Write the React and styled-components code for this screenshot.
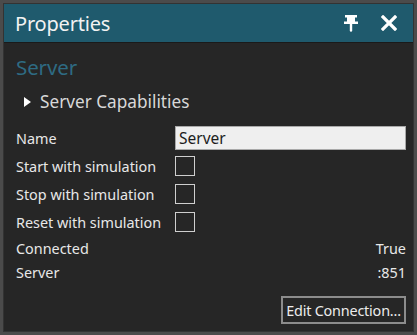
import React from "react";
import styled, { createGlobalStyle } from "styled-components";

const Global = createGlobalStyle`
  html, body { margin: 0; padding: 0; background: #262626; }
  * { box-sizing: border-box; }
`;

const Panel = styled.div`
  width: 417px;
  height: 335px;
  background: #262626;
  border: 3px solid #4b4b4b;
  box-shadow: inset 0 0 0 1px #333;
  display: flex;
  flex-direction: column;
  font-family: "Noto Sans", "Open Sans", sans-serif;
  color: #e6e6e6;
`;

const TitleBar = styled.div`
  height: 39px;
  margin: 1px 1px 0 1px;
  background: #1f5a6d;
  display: flex;
  align-items: center;
  padding: 0 15px 0 11px;
  border-bottom: 1px solid #1a1a1a;
`;

const Title = styled.div`
  flex: 1;
  font-size: 20px;
  color: #f2f2f2;
  letter-spacing: -0.2px;
`;

const IconBtn = styled.div`
  width: 18px;
  height: 18px;
  display: flex;
  align-items: center;
  justify-content: center;
  margin-left: ${(p) => p.$gap || 0}px;
`;

const Body = styled.div`
  flex: 1;
  display: flex;
  flex-direction: column;
  padding: 11px 8px 0 13px;
`;

const Heading = styled.div`
  font-size: 20.5px;
  color: #2e6b83;
  line-height: 26px;
  letter-spacing: -0.1px;
`;

const Expander = styled.div`
  display: flex;
  align-items: center;
  margin: 10px 0 0 8px;
  font-size: 17.2px;
  color: #d8d8d8;
  line-height: 24px;
  gap: 9px;
`;

const Rows = styled.div`
  display: flex;
  flex-direction: column;
  margin-top: 10px;
`;

const Row = styled.div`
  display: grid;
  grid-template-columns: 159px 1fr;
  align-items: center;
  height: ${(p) => p.$h || 28}px;
  font-size: 14.4px;
  color: #e8e8e8;
`;

const InfoRow = styled.div`
  display: flex;
  justify-content: space-between;
  align-items: center;
  height: 24px;
  font-size: 14.4px;
  color: #e8e8e8;
`;

const TextInput = styled.div`
  height: 24px;
  background: #efefef;
  border: 1px solid #a9a9a9;
  color: #1c1c1c;
  font-size: 15.5px;
  display: flex;
  align-items: center;
  padding-left: 3px;
`;

const Check = styled.div`
  width: 20px;
  height: 20px;
  border: 1.5px solid #cfcfcf;
  background: #262626;
`;

const Footer = styled.div`
  display: flex;
  justify-content: flex-end;
  margin-top: 12px;
`;

const Button = styled.div`
  width: 125px;
  height: 28px;
  border: 2px solid #8c8c8c;
  display: flex;
  align-items: center;
  justify-content: center;
  font-size: 14.4px;
  color: #ececec;
  letter-spacing: -0.2px;
`;

export default function App() {
  return (
    <>
      <Global />
      <Panel>
        <TitleBar>
          <Title>Properties</Title>
          <IconBtn>
            <svg width="14" height="18" viewBox="0 0 14 18">
              <path d="M1 1h12v2.5H1z M3 3.5h8v4H3z M0 7.5h14v2.5H0z M5.8 10h2.4v7l-1.2 1-1.2-1z" fill="#ffffff" />
            </svg>
          </IconBtn>
          <IconBtn $gap={20}>
            <svg width="16" height="16" viewBox="0 0 16 16">
              <path d="M2 2L14 14M14 2L2 14" stroke="#ffffff" strokeWidth="3.2" strokeLinecap="square" />
            </svg>
          </IconBtn>
        </TitleBar>
        <Body>
          <Heading>Server</Heading>
          <Expander>
            <svg width="7" height="10" viewBox="0 0 7 10">
              <path d="M0 0L7 5L0 10z" fill="#ffffff" />
            </svg>
            Server Capabilities
          </Expander>
          <Rows>
            <Row $h={28}>
              <span>Name</span>
              <TextInput>Server</TextInput>
            </Row>
            <Row>
              <span>Start with simulation</span>
              <Check />
            </Row>
            <Row>
              <span>Stop with simulation</span>
              <Check />
            </Row>
            <Row>
              <span>Reset with simulation</span>
              <Check />
            </Row>
            <InfoRow>
              <span>Connected</span>
              <span>True</span>
            </InfoRow>
            <InfoRow>
              <span>Server</span>
              <span>:851</span>
            </InfoRow>
          </Rows>
          <Footer>
            <Button>Edit Connection...</Button>
          </Footer>
        </Body>
      </Panel>
    </>
  );
}
